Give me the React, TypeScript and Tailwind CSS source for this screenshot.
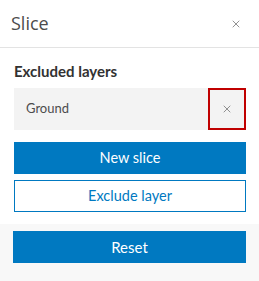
import { X } from "lucide-react";

export default function App() {
  return (
    <div className="flex h-[281px] w-[259px] flex-col bg-white font-['Lato',sans-serif]">
      <header className="flex h-[48px] shrink-0 items-center justify-between border-b border-[#e3e3e3] pl-[11px] pr-[17px]">
        <h1 className="font-['Open_Sans',sans-serif] text-[18px] text-[#4c4c4c]">Slice</h1>
        <button aria-label="Close" className="text-[#6e6e6e]">
          <X className="size-[12px]" strokeWidth={1.5} />
        </button>
      </header>

      <div className="flex flex-col pl-[14px] pr-[13px] pt-[13px] pb-[12px]">
        <h2 className="text-[15px] font-bold leading-[20px] text-[#323232]">Excluded layers</h2>

        <div className="mt-[7px] flex h-[42px] items-stretch bg-[#f3f3f3]">
          <span className="flex flex-1 items-center pl-[12px] text-[13px] text-[#4c4c4c]">Ground</span>
          <button
            aria-label="Remove layer"
            className="flex w-[38px] items-center justify-center border-2 border-[#c00000] text-[#6e6e6e]"
          >
            <X className="size-[12px]" strokeWidth={1.5} />
          </button>
        </div>

        <button className="mt-[12px] h-[32px] bg-[#0079c1] text-[14.5px] text-white">New slice</button>
        <button className="mt-[6px] h-[32px] border border-[#0079c1] bg-white text-[14.5px] text-[#0079c1]">
          Exclude layer
        </button>
      </div>

      <div className="flex-1 bg-[#f8f8f8] pl-[13px] pr-[13px] pt-[7px]">
        <button className="h-[32px] w-full bg-[#0079c1] text-[15px] text-white">Reset</button>
      </div>
    </div>
  );
}
